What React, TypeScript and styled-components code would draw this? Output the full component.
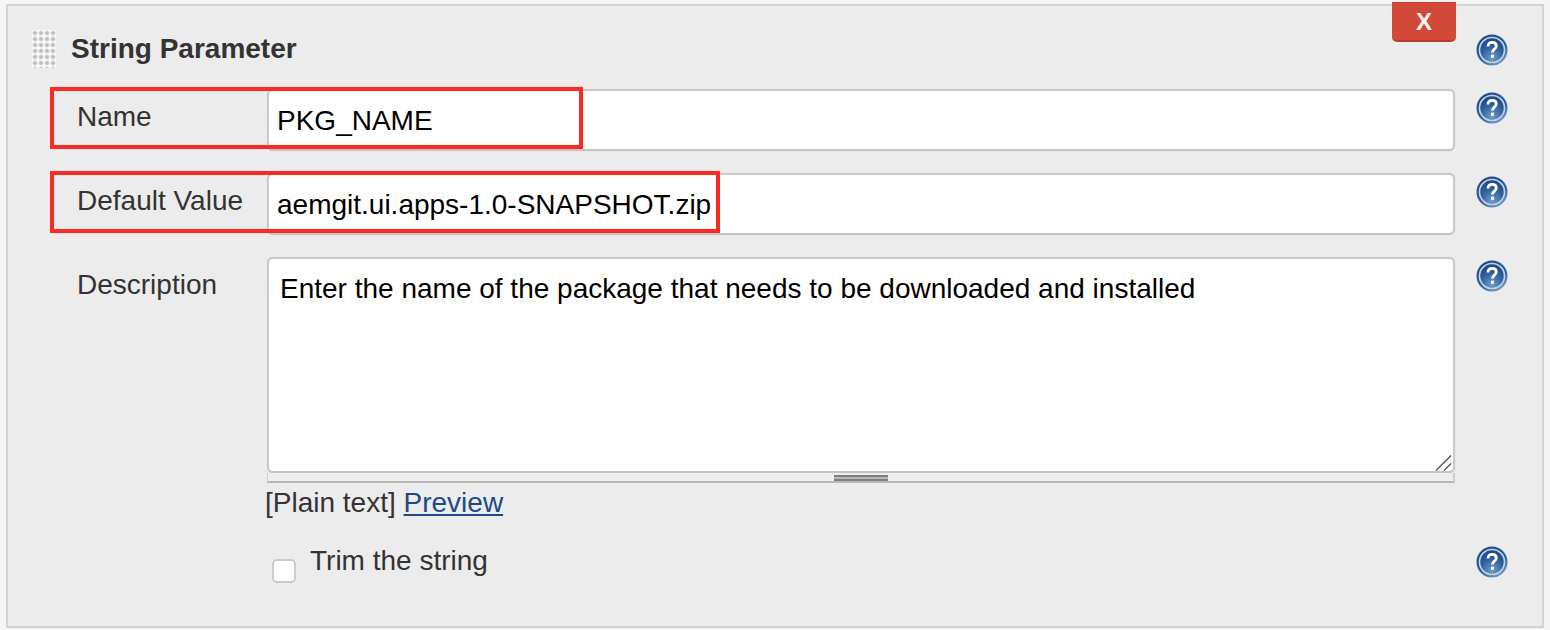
import React from 'react';
import styled, { createGlobalStyle } from 'styled-components';

const GlobalStyle = createGlobalStyle`
  html, body {
    margin: 0;
    padding: 0;
    background: #f5f5f5;
    font-family: "Liberation Sans", Arial, sans-serif;
    overflow: hidden;
  }
`;

const Panel = styled.div`
  position: relative;
  box-sizing: border-box;
  width: 1538px;
  height: 624px;
  margin: 4px 0 0 6px;
  padding: 0 34px 0 24px;
  background: #ececec;
  border: 2px solid #d3d3d3;
`;

const Header = styled.div`
  display: flex;
  align-items: flex-start;
  height: 61px;
  margin-bottom: 22px;
`;

const DragHandle = styled.div`
  width: 24px;
  height: 38px;
  margin-top: 24px;
  margin-right: 15px;
  background-color: #f9f9f9;
  background-image: radial-gradient(circle at 3px 3px, #b8b8b8 0, #c4c4c4 1.4px, transparent 2.9px);
  background-size: 6px 6px;
`;

const Title = styled.div`
  flex: 1;
  margin-top: 28px;
  font-size: 28px;
  line-height: 30px;
  font-weight: bold;
  color: #333;
`;

const DeleteButton = styled.button`
  position: absolute;
  top: -4px;
  right: 86px;
  box-sizing: border-box;
  width: 64px;
  height: 40px;
  padding: 0;
  background: #d24939;
  border: none;
  border-top: 1px solid #c5402f;
  border-bottom: 2px solid #b93c2e;
  border-radius: 0 0 5px 5px;
  color: #f3f3f3;
  font-family: inherit;
  font-size: 24px;
  font-weight: bold;
`;

const Row = styled.div`
  position: relative;
  display: grid;
  grid-template-columns: 189px 1188px 1fr;
  padding-left: 46px;
  margin-bottom: 22px;
`;

const Label = styled.label`
  margin-left: -1px;
  padding-top: 12px;
  font-size: 28px;
  line-height: 32px;
  color: #333;
`;

const TextInput = styled.input`
  box-sizing: border-box;
  display: block;
  width: 100%;
  height: 62px;
  padding: 2px 8px 0;
  background: #fff;
  border: 2px solid #cacaca;
  border-bottom-color: #c4c4c4;
  border-radius: 6px;
  box-shadow: 0 0 1px #bdbdbd;
  outline: none;
  color: #000;
  font-family: inherit;
  font-size: 28px;
`;

const EditorBox = styled.div`
  position: relative;
`;

const TextArea = styled.textarea`
  box-sizing: border-box;
  display: block;
  width: 100%;
  height: 216px;
  margin: 0;
  padding: 14px 11px;
  background: #fff;
  border: 2px solid #cacaca;
  border-bottom-color: #c4c4c4;
  border-radius: 6px;
  box-shadow: 0 0 1px #bdbdbd;
  outline: none;
  resize: none;
  color: #000;
  font-family: inherit;
  font-size: 28px;
  line-height: 32px;
`;

const ResizeCorner = styled.svg`
  position: absolute;
  top: 197px;
  right: 2px;
  width: 18px;
  height: 18px;
`;

const Grippie = styled.div`
  display: flex;
  justify-content: center;
  box-sizing: border-box;
  height: 10px;
  background: #eee;
  border-bottom: 2px solid #b9b9b3;
  border-left: 1px solid #cfcfcb;
  border-right: 2px solid #cfcfcb;
`;

const GrippieBar = styled.div`
  width: 54px;
  height: 6px;
  margin-top: 2px;
  background: repeating-linear-gradient(to bottom, #7f7f7f 0 2px, #b9b9b3 2px 4px);
`;

const EditorNote = styled.div`
  margin-top: 4px;
  margin-left: -2px;
  font-size: 28px;
  line-height: 32px;
  color: #333;
`;

const PreviewLink = styled.a`
  color: #204a87;
  text-decoration: underline;
`;

const TrimRow = styled(Row)`
  margin-top: 24px;
  margin-bottom: 0;
`;

const CheckLine = styled.div`
  display: flex;
  align-items: flex-start;
  padding-left: 5px;
`;

const CheckBox = styled.input`
  appearance: none;
  box-sizing: border-box;
  width: 24px;
  height: 24px;
  margin: 16px 14px 0 0;
  background: #fff;
  border: 2px solid #ccc;
  border-radius: 5px;
`;

const CheckText = styled.span`
  padding-top: 2px;
  font-size: 28px;
  line-height: 32px;
  color: #333;
`;

const HelpLink = styled.a<{ $top?: number }>`
  display: block;
  justify-self: end;
  width: 32px;
  height: 32px;
  margin-top: ${(p) => p.$top ?? 3}px;
`;

const HeaderHelp = styled(HelpLink)`
  flex: none;
`;

const Highlight = styled.div<{ $width: number }>`
  position: absolute;
  top: -2px;
  left: 18px;
  box-sizing: border-box;
  width: ${(p) => p.$width}px;
  height: 62px;
  border: 4px solid #fb2a20;
  pointer-events: none;
`;

const HelpSvg = styled.svg`
  display: block;
  filter: blur(0.45px);
`;

const HelpIcon = ({ id }: { id: string }) => (
  <HelpSvg width="32" height="32" viewBox="0 0 32 32">
    <defs>
      <linearGradient id={`${id}-rim`} x1="0.2" y1="0" x2="0.8" y2="1">
        <stop offset="0%" stopColor="#1c4a86" />
        <stop offset="55%" stopColor="#2f5f9c" />
        <stop offset="100%" stopColor="#7a9fc8" />
      </linearGradient>
      <radialGradient id={`${id}-core`} cx="50%" cy="85%" r="85%">
        <stop offset="0%" stopColor="#6f9ccb" />
        <stop offset="55%" stopColor="#2f609d" />
        <stop offset="100%" stopColor="#1b4680" />
      </radialGradient>
    </defs>
    <circle cx="16" cy="16" r="15.5" fill={`url(#${id}-rim)`} />
    <circle cx="16" cy="16" r="12.5" fill={`url(#${id}-core)`} stroke="#c3d3e5" strokeWidth="1.6" />
    <path
      d="M12 12.6c0-2.7 1.8-4.2 4.2-4.2 2.5 0 4.1 1.4 4.1 3.5 0 3.1-3.9 3.3-3.9 6.6"
      fill="none"
      stroke="#fff"
      strokeWidth="2.8"
    />
    <rect x="14.9" y="20.6" width="3" height="3.2" fill="#fff" />
  </HelpSvg>
);

const App = () => {
  return (
    <>
      <GlobalStyle />
      <Panel>
        <DeleteButton type="button">X</DeleteButton>
        <Header>
          <DragHandle />
          <Title>String Parameter</Title>
          <HeaderHelp $top={28}>
            <HelpIcon id="help-title" />
          </HeaderHelp>
        </Header>

        <Row>
          <Label>Name</Label>
          <TextInput readOnly defaultValue="PKG_NAME" />
          <HelpLink>
            <HelpIcon id="help-name" />
          </HelpLink>
          <Highlight $width={533} />
        </Row>

        <Row>
          <Label>Default Value</Label>
          <TextInput readOnly defaultValue="aemgit.ui.apps-1.0-SNAPSHOT.zip" />
          <HelpLink>
            <HelpIcon id="help-default" />
          </HelpLink>
          <Highlight $width={670} />
        </Row>

        <Row>
          <Label>Description</Label>
          <EditorBox>
            <TextArea readOnly defaultValue="Enter the name of the package that needs to be downloaded and installed" />
            <ResizeCorner viewBox="0 0 18 18">
              <path d="M1 16.5L16 1.5M9 16.5L16 9.5" stroke="#555" strokeWidth="1.4" fill="none" />
            </ResizeCorner>
            <Grippie>
              <GrippieBar />
            </Grippie>
            <EditorNote>
              [Plain text] <PreviewLink href="#">Preview</PreviewLink>
            </EditorNote>
          </EditorBox>
          <HelpLink>
            <HelpIcon id="help-description" />
          </HelpLink>
        </Row>

        <TrimRow>
          <span />
          <CheckLine>
            <CheckBox type="checkbox" />
            <CheckText>Trim the string</CheckText>
          </CheckLine>
          <HelpLink>
            <HelpIcon id="help-trim" />
          </HelpLink>
        </TrimRow>
      </Panel>
    </>
  );
};

export default App;
